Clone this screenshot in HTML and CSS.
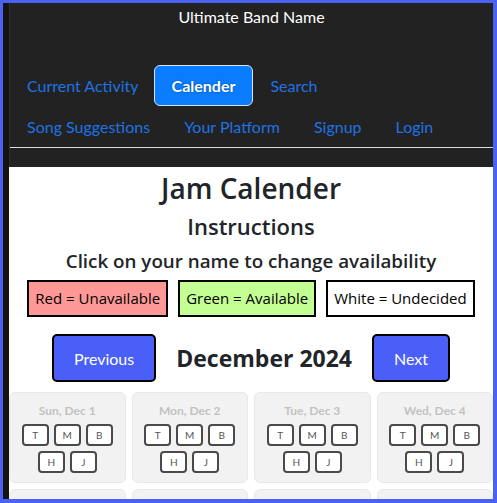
FILE: index.html
```html
<!DOCTYPE html>
<html lang="en">
<head>
<meta charset="utf-8">
<title>Jam Calender</title>
<link rel="stylesheet" href="styles.css">
</head>
<body>
<div class="frame">
  <div class="app">
    <header class="site-header">
      <div class="band-name">Ultimate Band Name</div>
      <div class="nav-wrap">
        <nav class="nav">
          <a class="nav-link" href="#">Current Activity</a>
          <a class="nav-link active" href="#">Calender</a>
          <a class="nav-link" href="#">Search</a>
          <a class="nav-link" href="#">Song Suggestions</a>
          <a class="nav-link" href="#">Your Platform</a>
          <a class="nav-link" href="#">Signup</a>
          <a class="nav-link" href="#">Login</a>
        </nav>
      </div>
    </header>
    <main class="content">
      <h1 class="title">Jam Calender</h1>
      <h2 class="subtitle">Instructions</h2>
      <h3 class="hint">Click on your name to change availability</h3>
      <div class="legend">
        <div class="legend-item red">Red = Unavailable</div>
        <div class="legend-item green">Green = Available</div>
        <div class="legend-item white">White = Undecided</div>
      </div>
      <div class="month-nav">
        <button class="month-btn">Previous</button>
        <div class="month-name">December 2024</div>
        <button class="month-btn">Next</button>
      </div>
      <div class="days">
        <div class="day">
          <div class="day-title">Sun, Dec 1</div>
          <div class="members"><span class="member">T</span><span class="member">M</span><span class="member">B</span><span class="member">H</span><span class="member">J</span></div>
        </div>
        <div class="day">
          <div class="day-title">Mon, Dec 2</div>
          <div class="members"><span class="member">T</span><span class="member">M</span><span class="member">B</span><span class="member">H</span><span class="member">J</span></div>
        </div>
        <div class="day">
          <div class="day-title">Tue, Dec 3</div>
          <div class="members"><span class="member">T</span><span class="member">M</span><span class="member">B</span><span class="member">H</span><span class="member">J</span></div>
        </div>
        <div class="day">
          <div class="day-title">Wed, Dec 4</div>
          <div class="members"><span class="member">T</span><span class="member">M</span><span class="member">B</span><span class="member">H</span><span class="member">J</span></div>
        </div>
        <div class="day">
          <div class="day-title">Thu, Dec 5</div>
          <div class="members"><span class="member">T</span><span class="member">M</span><span class="member">B</span><span class="member">H</span><span class="member">J</span></div>
        </div>
        <div class="day">
          <div class="day-title">Fri, Dec 6</div>
          <div class="members"><span class="member">T</span><span class="member">M</span><span class="member">B</span><span class="member">H</span><span class="member">J</span></div>
        </div>
        <div class="day">
          <div class="day-title">Sat, Dec 7</div>
          <div class="members"><span class="member">T</span><span class="member">M</span><span class="member">B</span><span class="member">H</span><span class="member">J</span></div>
        </div>
        <div class="day">
          <div class="day-title">Sun, Dec 8</div>
          <div class="members"><span class="member">T</span><span class="member">M</span><span class="member">B</span><span class="member">H</span><span class="member">J</span></div>
        </div>
      </div>
    </main>
  </div>
</div>
</body>
</html>
```
FILE: styles.css
```css
* { box-sizing: border-box; }

html, body {
  margin: 0;
  padding: 0;
  height: 100%;
}

body {
  background: #4a61f4;
  font-family: Lato, "Open Sans", sans-serif;
  color: #212529;
}

.frame {
  height: 503px;
  padding: 3px 4px 4px 3px;
}

.app {
  height: 100%;
  overflow: hidden;
  border-left: 6px solid #151311;
  background: #fff;
  display: flex;
  flex-direction: column;
}

.site-header {
  background: #222;
  border-left: 1px solid #2e2e2e;
  padding: 3px 0 19px 0;
}

.band-name {
  color: #fff;
  text-align: center;
  font-size: 16px;
  line-height: 22px;
  margin-bottom: 37px;
}

.nav-wrap {
  border-bottom: 1px solid #dcdcdc;
}

.nav {
  display: flex;
  flex-wrap: wrap;
  max-width: 460px;
}

.nav-link {
  display: block;
  height: 41px;
  padding: 0 17px;
  line-height: 41px;
  font-size: 16px;
  color: #1f72e4;
  text-decoration: none;
  border-radius: 6px;
}

.nav-link:first-child {
  padding-right: 15px;
}

.nav-link.active {
  background: #0a7cff;
  color: #fff;
  font-weight: 700;
  border: 1px solid #d8e4f0;
  line-height: 39px;
  padding: 0 17px;
  text-shadow: 0 0 2px rgba(0, 0, 0, 0.45);
}

.content {
  flex: 1;
  background: #fff;
  text-align: center;
}

.title,
.subtitle,
.hint,
.legend-item,
.month-name {
  font-family: "Open Sans", Lato, sans-serif;
}

.title {
  margin: 4px 0 0;
  font-size: 28px;
  line-height: 34px;
  font-weight: 600;
}

.subtitle {
  margin: 7px 0 0;
  font-size: 22px;
  line-height: 28px;
  font-weight: 600;
}

.hint {
  margin: 10px 0 0;
  font-size: 18.8px;
  line-height: 22px;
  font-weight: 600;
}

.legend {
  display: flex;
  justify-content: center;
  gap: 10px;
  margin-top: 8px;
}

.legend-item {
  height: 37px;
  line-height: 33px;
  padding: 0 6px;
  border: 2px solid #000;
  font-size: 15px;
  color: #000;
}

.legend-item.red { background: #ff9896; }
.legend-item.green { background: #c4ff94; }
.legend-item.white { background: #fff; }

.month-nav {
  display: flex;
  justify-content: center;
  align-items: center;
  gap: 20px;
  margin-top: 17px;
}

.month-btn {
  height: 48px;
  padding: 0 20px;
  background: #4a5ff8;
  color: #fff;
  border: 2px solid #000;
  border-radius: 5px;
  font-family: inherit;
  font-size: 16px;
}

.month-name {
  font-size: 23px;
  font-weight: 700;
}

.days {
  display: grid;
  grid-template-columns: repeat(4, 1fr);
  gap: 6px;
  margin-top: 10px;
}

.day {
  background: #f2f2f2;
  border: 1px solid #e8e8e8;
  border-radius: 6px;
  padding: 10px 9px 9px;
}

.day-title {
  font-size: 12px;
  line-height: 16px;
  font-weight: 700;
  color: #c2c2c2;
  margin-bottom: 5px;
}

.members {
  display: flex;
  flex-wrap: wrap;
  justify-content: center;
  gap: 5px;
}

.member {
  width: 27px;
  height: 22px;
  border: 2px solid #4a4a4a;
  border-radius: 4px;
  background: #fff;
  font-size: 10px;
  line-height: 18px;
  color: #555;
}
```
